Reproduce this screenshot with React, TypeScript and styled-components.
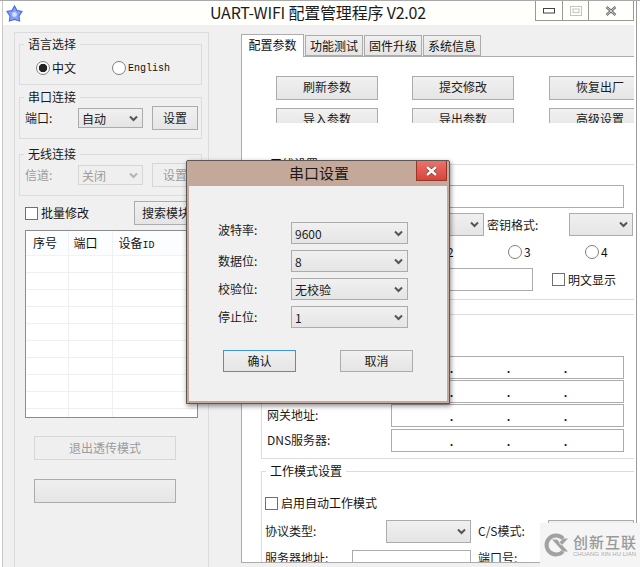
import React, { FC } from "react";
import styled, { createGlobalStyle, css } from "styled-components";

const GlobalStyle = createGlobalStyle`
  html, body {
    margin: 0;
    padding: 0;
    background: #fff;
  }
  * {
    box-sizing: border-box;
  }
  body {
    font-family: "Noto Sans CJK SC", "Liberation Sans", sans-serif;
    font-size: 12px;
    color: #111;
  }
`;

const Frame = styled.div`
  position: relative;
  width: 640px;
  height: 567px;
  overflow: hidden;
  background: #fff;
  border-top: 1px solid #a9a9a9;
`;

const Shell = styled.div`
  width: 635px;
  height: 566px;
  margin-left: 2px;
  border-left: 1px solid #c8c8c8;
  border-right: 1px solid #9a9a9a;
  background: #fff;
  display: flex;
  flex-direction: column;
`;

const TitleBar = styled.div`
  position: relative;
  height: 24px;
  flex: none;
  background: #fffffb;
  display: flex;
  align-items: center;
  justify-content: center;
`;

const AppIcon = styled.svg`
  position: absolute;
  left: 3px;
  top: 4px;
  width: 17px;
  height: 17px;
`;

const TitleText = styled.div`
  font-size: 16px;
  line-height: 24px;
  color: #1c1c1c;
  margin: -2px 0 0 -3px;
  letter-spacing: -0.2px;
`;

const WinControls = styled.div`
  position: absolute;
  right: 2px;
  top: 0;
  height: 20px;
  display: flex;
  border: 1px solid #9a9a94;
  border-top: 0;
  background: #fffffb;
`;

const WinBtn = styled.div<{ $w: number }>`
  width: ${(p) => p.$w}px;
  display: flex;
  align-items: center;
  justify-content: center;
  & + & {
    border-left: 1px solid #9a9a94;
  }
`;

const Body = styled.div`
  flex: 1;
  width: 631px;
  min-height: 0;
  display: flex;
  background: #f0f0f0;
`;

const Sidebar = styled.div`
  width: 238px;
  flex: none;
  padding: 7px 0 0 11px;
`;

const SidePanel = styled.div`
  width: 195px;
  height: 540px;
  padding: 3px 8px 0 4px;
  border: 1px solid #dcdcdc;
  border-bottom: 0;
`;

const Group = styled.fieldset<{ $h: number; $mt?: number }>`
  margin: ${(p) => p.$mt || 0}px 0 0 0;
  padding: 0;
  height: ${(p) => p.$h}px;
  width: 183px;
  border: 1px solid #dcdcdc;
  min-width: 0;
`;

const GroupTitle = styled.legend`
  margin-left: 4px;
  padding: 0 4px;
  font-size: 12px;
  line-height: 16px;
  color: #1a1a1a;
`;

const LangRow = styled.div`
  display: flex;
  align-items: center;
  padding: 7px 0 0 16px;
`;

const Radio = styled.span<{ $on?: boolean }>`
  display: inline-block;
  flex: none;
  width: 14px;
  height: 14px;
  border: 1px solid #808080;
  border-radius: 50%;
  background: #fff;
  ${(p) =>
    p.$on &&
    css`
      background: radial-gradient(circle, #222 0 3.8px, #fff 4.6px);
    `}
`;

const RadioLabel = styled.span<{ $w: number; $mono?: boolean }>`
  width: ${(p) => p.$w}px;
  margin-left: 2px;
  line-height: 14px;
  ${(p) =>
    p.$mono &&
    css`
      font-family: "Liberation Mono", monospace;
      font-size: 10px;
      margin-top: 3px;
    `}
`;

const PortRow = styled.div`
  display: flex;
  align-items: center;
  padding: 1px 0 0 5px;
`;

const RowLabel = styled.span<{ $w: number; $off?: boolean; $up?: number }>`
  width: ${(p) => p.$w}px;
  flex: none;
  white-space: nowrap;
  line-height: 16px;
  margin-bottom: ${(p) => p.$up || 0}px;
  color: ${(p) => (p.$off ? "#9b9b9b" : "#1a1a1a")};
`;

const SelectBox = styled.div<{ $w: number; $h?: number; $off?: boolean; $ml?: number }>`
  width: ${(p) => p.$w}px;
  height: ${(p) => p.$h || 23}px;
  flex: none;
  margin-left: ${(p) => p.$ml || 0}px;
  border: 1px solid ${(p) => (p.$off ? "#d6d6d6" : "#acacac")};
  background: ${(p) =>
    p.$off ? "#efefef" : "linear-gradient(#f0f0f0, #e5e5e5)"};
  color: ${(p) => (p.$off ? "#9b9b9b" : "#1a1a1a")};
  display: flex;
  align-items: center;
  justify-content: space-between;
  padding: 0 4px 0 3px;
  font-size: 12px;
  white-space: nowrap;
`;

const Chevron = styled.svg<{ $off?: boolean }>`
  width: 9px;
  height: 7px;
  flex: none;
  fill: none;
  stroke: ${(p) => (p.$off ? "#b5b5b5" : "#555")};
  stroke-width: 2;
`;

const PushButton = styled.div<{ $w: number; $h?: number; $off?: boolean; $focus?: boolean; $ml?: number }>`
  width: ${(p) => p.$w}px;
  height: ${(p) => p.$h || 24}px;
  flex: none;
  margin-left: ${(p) => p.$ml || 0}px;
  padding-bottom: 2px;
  border: 1px solid ${(p) => (p.$focus ? "#3d93e8" : p.$off ? "#d6d6d6" : "#acacac")};
  background: ${(p) => (p.$off ? "#efefef" : "linear-gradient(#f0f0f0, #e5e5e5)")};
  color: ${(p) => (p.$off ? "#9b9b9b" : "#1a1a1a")};
  display: flex;
  align-items: center;
  justify-content: center;
  font-size: 12px;
  white-space: nowrap;
`;

const BatchRow = styled.div`
  height: 24px;
  margin: 5px 0 0 6px;
  display: flex;
  align-items: center;
`;

const CheckBox = styled.span`
  display: inline-block;
  flex: none;
  width: 13px;
  height: 13px;
  border: 1px solid #707070;
  background: #fff;
`;

const CheckLabel = styled.span`
  margin-left: 3px;
  line-height: 16px;
  white-space: nowrap;
`;

const ListWrap = styled.div`
  width: 173px;
  height: 188px;
  margin: 5px 0 0 6px;
  background: #fff;
  border: 1px solid #8c8c8c;
  overflow: hidden;
`;

const ListTable = styled.table`
  width: 171px;
  border-collapse: collapse;
  table-layout: fixed;
`;

const HeadCell = styled.th<{ $w: number; $pl: number }>`
  width: ${(p) => p.$w}px;
  height: 24px;
  padding: 0 0 0 ${(p) => p.$pl}px;
  font-weight: 400;
  font-size: 12px;
  text-align: left;
  background: #fcfdff;
  border-right: 1px solid #eef3fa;
  border-bottom: 1px solid #eef3fa;
`;

const MonoBit = styled.span`
  font-family: "Liberation Mono", monospace;
  font-size: 10px;
`;

const ListCell = styled.td`
  height: 17px;
  padding: 0;
  border-right: 1px solid #efefef;
  border-bottom: 1px solid #efefef;
`;

const SideActions = styled.div`
  display: flex;
  flex-direction: column;
  gap: 19px;
  margin: 18px 0 0 15px;
`;

const Main = styled.div`
  flex: 1;
  min-width: 0;
  display: flex;
  flex-direction: column;
`;

const TabStrip = styled.div`
  height: 32px;
  flex: none;
  display: flex;
  align-items: flex-end;
  gap: 1px;
  border-bottom: 1px solid #acacac;
`;

const Tab = styled.div<{ $on?: boolean }>`
  width: ${(p) => (p.$on ? 63 : 58)}px;
  height: ${(p) => (p.$on ? 23 : 21)}px;
  margin-bottom: ${(p) => (p.$on ? -1 : 0)}px;
  padding-bottom: ${(p) => (p.$on ? 3 : 1)}px;
  background: ${(p) => (p.$on ? "#fff" : "linear-gradient(#f0f0f0, #e5e5e5)")};
  border: 1px solid #acacac;
  border-bottom: ${(p) => (p.$on ? "0" : "1px solid #acacac")};
  display: flex;
  align-items: center;
  justify-content: center;
  font-size: 12px;
  white-space: nowrap;
`;

const Content = styled.div`
  width: 393px;
  height: 506px;
  background: #fff;
  border-left: 1px solid #acacac;
  border-bottom: 1px solid #acacac;
  overflow: hidden;
`;

const ActionGrid = styled.div`
  height: 47px;
  margin: 19px 0 0 34px;
  overflow: hidden;
  display: grid;
  grid-template-columns: 136px 137px 102px;
  grid-auto-rows: 24px;
  row-gap: 8px;
  & > div {
    padding-bottom: 4px;
  }
`;

const Section = styled.fieldset<{ $h: number; $mt: number; $open?: boolean }>`
  margin: ${(p) => p.$mt}px 0 0 19px;
  padding: 0;
  width: 373px;
  height: ${(p) => p.$h}px;
  min-width: 0;
  border: 1px solid #dcdcdc;
  border-right: 0;
  ${(p) =>
    p.$open &&
    css`
      border-bottom: 0;
    `}
`;

const SectionTitle = styled.legend`
  margin-left: 4px;
  padding: 0 4px;
  font-size: 12px;
  line-height: 16px;
`;

const FieldRow = styled.div<{ $mt: number; $pl?: number; $top?: boolean }>`
  display: flex;
  align-items: ${(p) => (p.$top ? "flex-start" : "center")};
  margin-top: ${(p) => p.$mt}px;
  padding-left: ${(p) => p.$pl || 0}px;
`;

const TextBox = styled.div<{ $w: number; $ml?: number }>`
  width: ${(p) => p.$w}px;
  height: 23px;
  flex: none;
  margin-left: ${(p) => p.$ml || 0}px;
  background: #fff;
  border: 1px solid #acacac;
`;

const RadioCell = styled.div`
  width: 77px;
  flex: none;
  display: flex;
  align-items: center;
`;

const IpBox = styled.div`
  width: 233px;
  height: 23px;
  flex: none;
  background: #fff;
  border: 1px solid #acacac;
  display: flex;
  padding-left: 31px;
`;

const IpDot = styled.span`
  width: 57px;
  text-align: center;
  line-height: 22px;
  font-weight: 700;
  font-size: 11px;
`;

const Dialog = styled.div`
  position: absolute;
  left: 186px;
  top: 159px;
  width: 264px;
  height: 244px;
  background: #c4a899;
  border: 1px solid #5d5653;
  border-radius: 2px 2px 0 0;
  box-shadow: 1px 2px 5px rgba(0, 0, 0, 0.45);
  padding: 0 2px 2px 2px;
  display: flex;
  flex-direction: column;
`;

const DialogHead = styled.div`
  position: relative;
  height: 25px;
  flex: none;
  display: flex;
  align-items: center;
  justify-content: center;
  font-size: 15px;
  color: #1a1a1a;
  padding: 0 0 3px 2px;
`;

const CloseBtn = styled.div`
  position: absolute;
  right: 0;
  top: 0;
  width: 31px;
  height: 20px;
  background: linear-gradient(#e9746a, #d9433a);
  border: 1px solid #96352c;
  border-top: 0;
  display: flex;
  align-items: center;
  justify-content: center;
`;

const DialogBody = styled.div`
  flex: 1;
  background: #f0f0f0;
  padding: 36px 0 0 29px;
`;

const SettingGrid = styled.div`
  display: grid;
  grid-template-columns: 73px 117px;
  grid-template-rows: 22px 22px 22px 22px;
  row-gap: 6px;
  align-items: center;
`;

const DialogActions = styled.div`
  display: flex;
  margin: 22px 0 0 5px;
  gap: 44px;
`;

const Watermark = styled.div`
  position: absolute;
  right: 0;
  bottom: 0;
  width: 100px;
  height: 44px;
  background: #f5f5f5;
  display: flex;
  align-items: center;
  padding: 0 0 0 4px;
`;

const MarkText = styled.div`
  margin-left: 3px;
  color: #9a9a9a;
`;

const MarkName = styled.div`
  font-size: 15px;
  line-height: 18px;
  font-weight: 500;
  letter-spacing: 1px;
  white-space: nowrap;
`;

const MarkPinyin = styled.div`
  font-family: "Liberation Sans", sans-serif;
  font-size: 6px;
  line-height: 7px;
  white-space: nowrap;
  color: #ababab;
`;

const Arrow: FC<{ off?: boolean }> = ({ off }) => (
  <Chevron $off={off} viewBox="0 0 9 7">
    <path d="M1 1.5 L4.5 5 L8 1.5" />
  </Chevron>
);

interface ISelect {
  w: number;
  h?: number;
  ml?: number;
  off?: boolean;
  value?: string;
}

const Select: FC<ISelect> = ({ w, h, ml, off, value }) => (
  <SelectBox $w={w} $h={h} $ml={ml} $off={off}>
    <span>{value}</span>
    <Arrow off={off} />
  </SelectBox>
);

const IpField: FC = () => (
  <IpBox>
    <IpDot>.</IpDot>
    <IpDot>.</IpDot>
    <IpDot>.</IpDot>
  </IpBox>
);

const rows = Array.from({ length: 10 }, (_, i) => i);

const dialogFields = [
  { label: "波特率:", value: "9600", up: 6 },
  { label: "数据位:", value: "8", up: 0 },
  { label: "校验位:", value: "无校验", up: 0 },
  { label: "停止位:", value: "1", up: 0 },
];

const ipRows = ["IP地址:", "子网掩码:", "网关地址:", "DNS服务器:"];

export default function App() {
  return (
    <Frame>
      <GlobalStyle />
      <Shell>
        <TitleBar>
          <AppIcon viewBox="0 0 17 17">
            <path
              d="M8.5 1 L11 5.6 L16 6.4 L13 11 L13.6 16 L8.5 14.4 L3.4 16 L4 11 L1 6.4 L6 5.6 Z"
              fill="#86a2f6"
              stroke="#4f70e8"
              strokeWidth="1.2"
            />
            <circle cx="8.5" cy="9.5" r="2.4" fill="#d5dffc" />
          </AppIcon>
          <TitleText>UART-WIFI 配置管理程序 V2.02</TitleText>
          <WinControls>
            <WinBtn $w={26}>
              <svg width="12" height="6" viewBox="0 0 12 6">
                <rect x="0.5" y="0.5" width="11" height="4.5" fill="none" stroke="#444" />
              </svg>
            </WinBtn>
            <WinBtn $w={26}>
              <svg width="12" height="10" viewBox="0 0 12 10">
                <rect x="0.5" y="0.5" width="11" height="9" fill="none" stroke="#c4c4c0" />
                <rect x="3" y="3" width="6" height="3.5" fill="none" stroke="#c4c4c0" />
              </svg>
            </WinBtn>
            <WinBtn $w={45}>
              <svg width="12" height="10" viewBox="0 0 12 10">
                <path d="M1.5 1 L10.5 9 M10.5 1 L1.5 9" stroke="#666" strokeWidth="2.4" />
                <path d="M1.5 1 L10.5 9 M10.5 1 L1.5 9" stroke="#f4f4f0" strokeWidth="0.8" />
              </svg>
            </WinBtn>
          </WinControls>
        </TitleBar>
        <Body>
          <Sidebar>
            <SidePanel>
              <Group $h={49}>
                <GroupTitle>语言选择</GroupTitle>
                <LangRow>
                  <Radio $on />
                  <RadioLabel $w={60}>中文</RadioLabel>
                  <Radio />
                  <RadioLabel $w={50} $mono>
                    English
                  </RadioLabel>
                </LangRow>
              </Group>
              <Group $h={50} $mt={4}>
                <GroupTitle>串口连接</GroupTitle>
                <PortRow>
                  <RowLabel $w={53}>端口:</RowLabel>
                  <Select w={65} h={20} value="自动" />
                  <PushButton $w={46} $ml={9}>
                    设置
                  </PushButton>
                </PortRow>
              </Group>
              <Group $h={50} $mt={7}>
                <GroupTitle>无线连接</GroupTitle>
                <PortRow>
                  <RowLabel $w={53} $off>
                    信道:
                  </RowLabel>
                  <Select w={65} h={20} value="关闭" off />
                  <PushButton $w={46} $ml={9} $off>
                    设置
                  </PushButton>
                </PortRow>
              </Group>
              <BatchRow>
                <CheckBox />
                <CheckLabel>批量修改</CheckLabel>
                <PushButton $w={64} $ml={45}>
                  搜索模块
                </PushButton>
              </BatchRow>
              <ListWrap>
                <ListTable>
                  <thead>
                    <tr>
                      <HeadCell $w={42} $pl={7}>序号</HeadCell>
                      <HeadCell $w={44} $pl={5}>端口</HeadCell>
                      <HeadCell $w={85} $pl={6}>
                        设备<MonoBit>ID</MonoBit>
                      </HeadCell>
                    </tr>
                  </thead>
                  <tbody>
                    {rows.map((r) => (
                      <tr key={r}>
                        <ListCell />
                        <ListCell />
                        <ListCell />
                      </tr>
                    ))}
                  </tbody>
                </ListTable>
              </ListWrap>
              <SideActions>
                <PushButton $w={142} $off>
                  退出透传模式
                </PushButton>
                <PushButton $w={142} />
              </SideActions>
            </SidePanel>
          </Sidebar>
          <Main>
            <TabStrip>
              <Tab $on>配置参数</Tab>
              <Tab>功能测试</Tab>
              <Tab>固件升级</Tab>
              <Tab>系统信息</Tab>
            </TabStrip>
            <Content>
              <ActionGrid>
                <PushButton $w={102}>刷新参数</PushButton>
                <PushButton $w={102}>提交修改</PushButton>
                <PushButton $w={102}>恢复出厂</PushButton>
                <PushButton $w={102}>导入参数</PushButton>
                <PushButton $w={102}>导出参数</PushButton>
                <PushButton $w={102}>高级设置</PushButton>
              </ActionGrid>
              <Section $h={144} $mt={33}>
                <SectionTitle>无线设置</SectionTitle>
                <FieldRow $mt={13} $pl={129}>
                  <TextBox $w={233} />
                </FieldRow>
                <FieldRow $mt={5} $pl={129}>
                  <Select w={93} />
                  <RowLabel $w={82} style={{ marginLeft: 3 }}>
                    密钥格式:
                  </RowLabel>
                  <Select w={64} />
                </FieldRow>
                <FieldRow $mt={9} $pl={92}>
                  {["1", "2", "3", "4"].map((n) => (
                    <RadioCell key={n}>
                      <Radio />
                      <RadioLabel $w={20}>{n}</RadioLabel>
                    </RadioCell>
                  ))}
                </FieldRow>
                <FieldRow $mt={9} $pl={129}>
                  <TextBox $w={142} />
                  <CheckBox style={{ marginLeft: 19 }} />
                  <CheckLabel>明文显示</CheckLabel>
                </FieldRow>
              </Section>
              <Section $h={153} $mt={6}>
                <SectionTitle>网络设置</SectionTitle>
                {ipRows.map((label, i) => (
                  <FieldRow key={label} $mt={i === 0 ? 34 : i === 3 ? 2 : 1} $pl={5}>
                    <RowLabel $w={124} $up={2}>{label}</RowLabel>
                    <IpField />
                  </FieldRow>
                ))}
              </Section>
              <Section $h={110} $mt={4} $open>
                <SectionTitle>工作模式设置</SectionTitle>
                <FieldRow $mt={16} $pl={3}>
                  <CheckBox />
                  <CheckLabel>启用自动工作模式</CheckLabel>
                </FieldRow>
                <FieldRow $mt={9} $pl={3}>
                  <RowLabel $w={121} $up={2}>协议类型:</RowLabel>
                  <Select w={85} />
                  <RowLabel $w={70} $up={2} style={{ marginLeft: 7 }}>
                    C/S模式:
                  </RowLabel>
                  <Select w={86} />
                </FieldRow>
                <FieldRow $mt={7} $pl={3} $top>
                  <RowLabel $w={87}>服务器地址:</RowLabel>
                  <TextBox $w={119} />
                  <RowLabel $w={50} style={{ marginLeft: 7 }}>
                    端口号:
                  </RowLabel>
                </FieldRow>
              </Section>
            </Content>
          </Main>
        </Body>
      </Shell>

      <Dialog>
        <DialogHead>
          串口设置
          <CloseBtn>
            <svg width="13" height="10" viewBox="0 0 13 10">
              <path d="M2 1 L11 9 M11 1 L2 9" stroke="#5b1f1a" strokeWidth="3.6" />
              <path d="M2 1 L11 9 M11 1 L2 9" stroke="#fff" strokeWidth="2.6" />
            </svg>
          </CloseBtn>
        </DialogHead>
        <DialogBody>
          <SettingGrid>
            {dialogFields.map((f) => (
              <React.Fragment key={f.label}>
                <RowLabel $w={73} $up={f.up}>{f.label}</RowLabel>
                <Select w={117} h={22} value={f.value} />
              </React.Fragment>
            ))}
          </SettingGrid>
          <DialogActions>
            <PushButton $w={73} $h={22} $focus>
              确认
            </PushButton>
            <PushButton $w={73} $h={22}>
              取消
            </PushButton>
          </DialogActions>
        </DialogBody>
      </Dialog>

      <Watermark>
        <svg width="26" height="24" viewBox="0 0 26 24">
          <path
            d="M19 5.5 A9.5 9.5 0 1 0 19 18.5"
            fill="none"
            stroke="#a2a2a2"
            strokeWidth="4"
          />
          <path
            d="M8 6.5 L13 6.5 L24 18.5 L19 18.5 Z M24 5.5 L19 5.5 L15 10 L17.5 12.5 Z"
            fill="#a2a2a2"
          />
        </svg>
        <MarkText>
          <MarkName>创新互联</MarkName>
          <MarkPinyin>CHUANG XIN HU LIAN</MarkPinyin>
        </MarkText>
      </Watermark>
    </Frame>
  );
}
